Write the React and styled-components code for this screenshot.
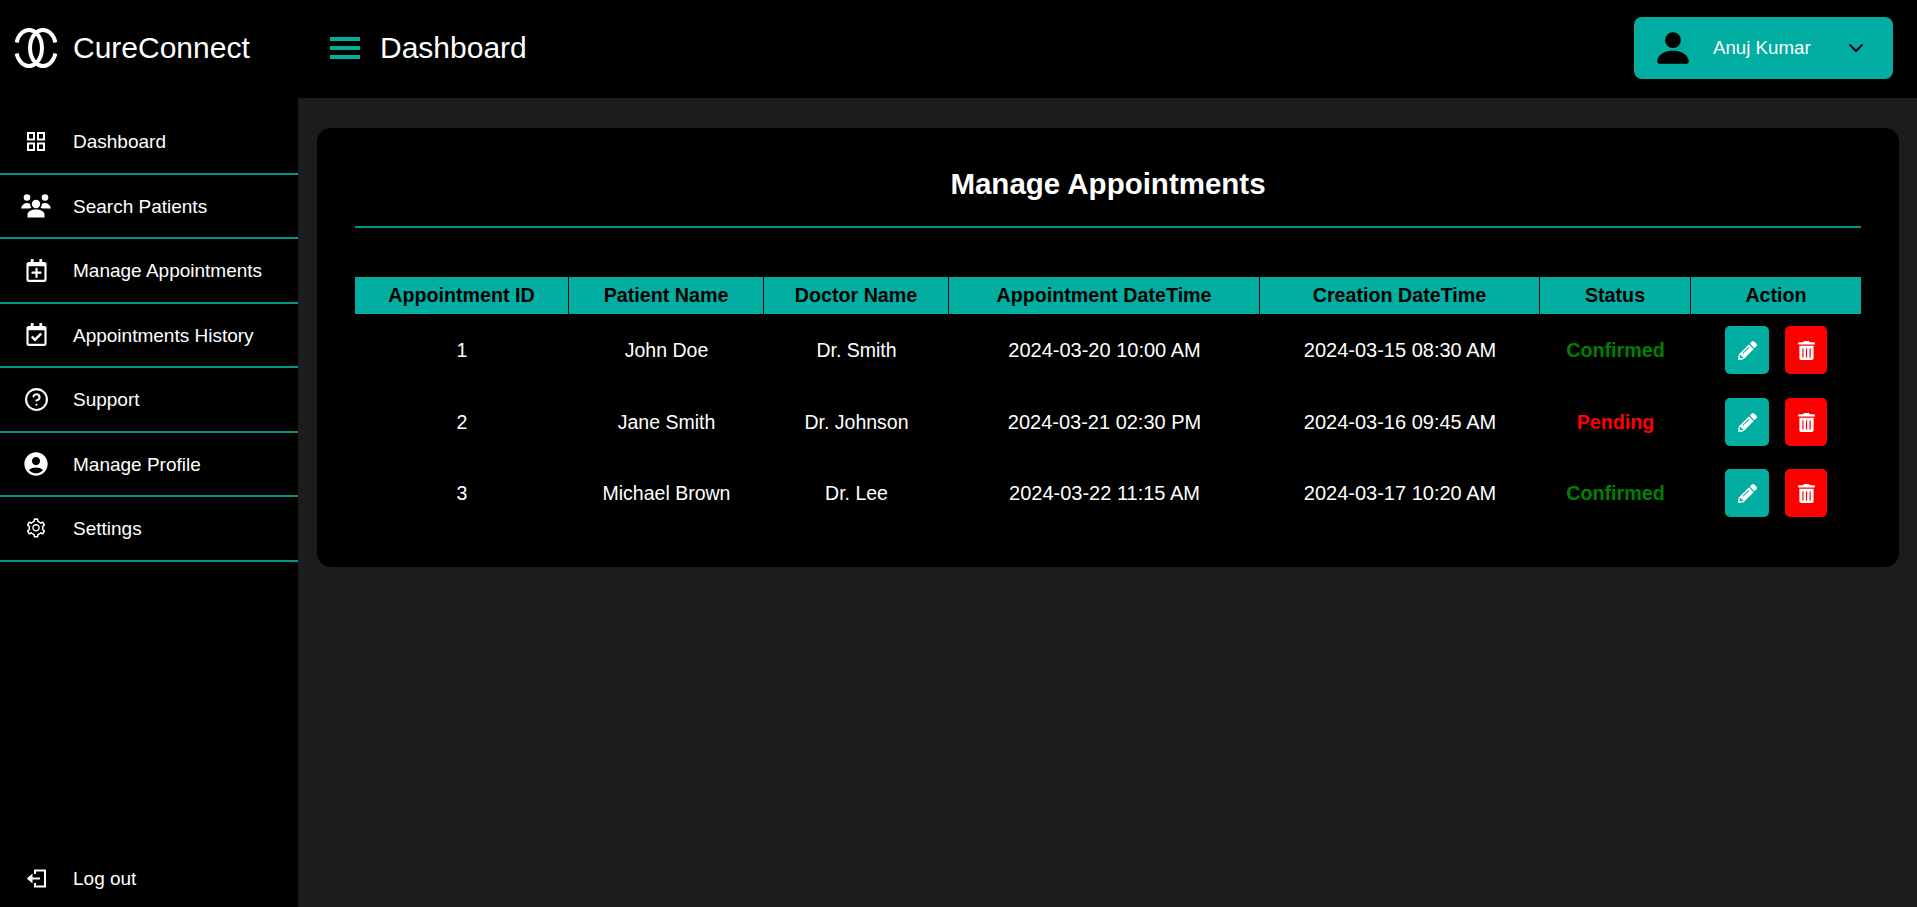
import React from "react";
import styled, { createGlobalStyle } from "styled-components";
import { MdAccountCircle } from "react-icons/md";
import { FaRegCalendarPlus, FaRegCalendarCheck, FaPencilAlt, FaTrashAlt } from "react-icons/fa";
import { FiHelpCircle, FiChevronDown } from "react-icons/fi";
import { AiOutlineSetting } from "react-icons/ai";
import { BsPersonFill } from "react-icons/bs";

const TEAL = "#02ada1";
const RULE = "#02928a";

const Global = createGlobalStyle`
  html, body { margin: 0; padding: 0; height: 100%; background: #000; }
  body { font-family: "Liberation Sans", Arial, sans-serif; color: #fff; }
  * { box-sizing: border-box; }
`;

const Shell = styled.div`
  display: grid;
  grid-template-columns: 298px 1fr;
  grid-template-rows: 98px 1fr;
  height: 907px;
  overflow: hidden;
`;

const Brand = styled.div`
  display: flex;
  align-items: center;
  padding: 0 0 2px 14px;
  gap: 15px;
  background: #000;
`;

const BrandName = styled.span`
  font-size: 30px;
`;

const TopBar = styled.header`
  display: flex;
  align-items: center;
  justify-content: space-between;
  padding: 0 24px 2px 32px;
  background: #000;
`;

const TitleGroup = styled.div`
  display: flex;
  align-items: center;
  gap: 20px;
`;

const Burger = styled.div`
  display: flex;
  flex-direction: column;
  justify-content: space-between;
  width: 30px;
  height: 22px;
  & > span { display: block; height: 4px; background: ${TEAL}; }
`;

const PageTitle = styled.h1`
  margin: 0;
  font-size: 30px;
  font-weight: 400;
`;

const UserButton = styled.button`
  display: flex;
  align-items: center;
  width: 259px;
  height: 62px;
  padding: 0 25px 0 18px;
  border: 0;
  border-radius: 8px;
  background: ${TEAL};
  color: #fff;
  font: 18.7px "Liberation Sans", Arial, sans-serif;
  & > span { margin-left: 19px; flex: 1; text-align: left; }
  & > svg { color: #000; }
`;

const Side = styled.aside`
  display: flex;
  flex-direction: column;
  justify-content: space-between;
  padding-top: 12px;
  background: #000;
`;

const NavList = styled.nav`
  display: flex;
  flex-direction: column;
`;

const NavRow = styled.div`
  display: flex;
  align-items: center;
  height: ${({ $plain }) => ($plain ? "58px" : "64.5px")};
  border-bottom: ${({ $plain }) => ($plain ? "0" : `2px solid ${RULE}`)};
  font-size: 19px;
`;

const NavIcon = styled.span`
  display: flex;
  align-items: center;
  justify-content: center;
  width: 73px;
  flex: none;
  padding-right: 1px;
`;

const NavLabel = styled.span`
  padding-top: 2px;
`;

const Main = styled.main`
  padding: 30px 18px 0 19px;
  background: #1b1d1c;
`;

const Card = styled.section`
  height: 439px;
  padding: 30px 38px 0 38px;
  border-radius: 14px;
  background: #000;
`;

const CardTitle = styled.h2`
  margin: 0;
  height: 70px;
  padding-top: 7px;
  border-bottom: 2px solid ${RULE};
  font-size: 29.5px;
  line-height: 38px;
  text-align: center;
`;

const Table = styled.table`
  width: 1506px;
  margin-top: 49px;
  table-layout: fixed;
  border-collapse: separate;
  border-spacing: 0;
`;

const Th = styled.th`
  height: 37px;
  padding: 0;
  background: ${TEAL};
  border-right: 1px solid #000;
  color: #000;
  font-size: 19.7px;
  font-weight: 700;
  &:last-child { border-right: 0; }
`;

const BodyRow = styled.tr`
  height: 72px;
  &:last-child { height: 70px; }
`;

const ActionCell = styled.td`
  padding: 0;
`;

const Td = styled.td`
  padding: 0;
  text-align: center;
  font-size: ${({ $date }) => ($date ? "20px" : "19.5px")};
`;

const Status = styled(Td)`
  font-size: 19.7px;
  font-weight: 700;
  color: ${({ $ok }) => ($ok ? "#008000" : "#ff0000")};
`;

const Actions = styled.div`
  display: flex;
  justify-content: center;
  gap: 16px;
`;

const ActionButton = styled.button`
  display: flex;
  align-items: center;
  justify-content: center;
  width: ${({ $danger }) => ($danger ? "42px" : "44px")};
  height: 48px;
  padding: 0;
  border: 0;
  border-radius: 5px;
  background: ${({ $danger }) => ($danger ? "#ff0000" : TEAL)};
  color: #fff;
`;

const Logo = () => (
  <svg width="44" height="40" viewBox="0 0 44 40" fill="none" stroke="#fff" strokeWidth="4">
    <path d="M2.600 14.500A13 18 0 1 1 2.600 25.500" />
    <path d="M41.400 14.500A13 18 0 1 0 41.400 25.500" />
  </svg>
);

const GridIcon = () => (
  <svg width="18" height="19" viewBox="0 0 18 19" fill="none" stroke="#fff" strokeWidth="2">
    <rect x="1" y="1" width="6" height="6.500" />
    <rect x="11" y="1" width="6" height="6.500" />
    <rect x="1" y="11.500" width="6" height="6.500" />
    <rect x="11" y="11.500" width="6" height="6.500" />
  </svg>
);

const GroupIcon = () => (
  <svg width="30" height="24" viewBox="0 0 30 24" fill="#fff">
    <circle cx="6" cy="3.500" r="3.300" />
    <circle cx="24" cy="3.500" r="3.300" />
    <path d="M0 14.500c.6-3 3-5.500 6-5.500 1.200 0 2.300.3 3.200 1-.3 1.500.5 3 1.500 4-1.600.1-2.800.3-3.700.5z" />
    <path d="M30 14.500c-.6-3-3-5.500-6-5.500-1.200 0-2.300.3-3.200 1 .3 1.500-.5 3-1.500 4 1.600.1 2.800.3 3.700.5z" />
    <circle cx="15" cy="10" r="4.200" />
    <path d="M6.500 23.500v-3c0-3 4-5 8.500-5s8.500 2 8.500 5v3z" />
  </svg>
);

const LogoutIcon = () => (
  <svg width="20" height="19" viewBox="0 0 20 19">
    <path d="M9 5V1.500h10v16H9V14" fill="none" stroke="#fff" strokeWidth="2" />
    <path d="M14 8.500v2H6v-2z" fill="#fff" />
    <path d="M6.500 4.500v10L.800 9.500z" fill="#fff" />
  </svg>
);

const navItems = [
  [<GridIcon />, "Dashboard"],
  [<GroupIcon />, "Search Patients"],
  [<FaRegCalendarPlus size={23} />, "Manage Appointments"],
  [<FaRegCalendarCheck size={23} />, "Appointments History"],
  [<FiHelpCircle size={25} />, "Support"],
  [<MdAccountCircle size={28} />, "Manage Profile"],
  [<AiOutlineSetting size={22} />, "Settings"],
];

const columns = [
  ["Appointment ID", 214],
  ["Patient Name", 195],
  ["Doctor Name", 185],
  ["Appointment DateTime", 311],
  ["Creation DateTime", 280],
  ["Status", 151],
  ["Action", 170],
];

const rows = [
  [1, "John Doe", "Dr. Smith", "2024-03-20 10:00 AM", "2024-03-15 08:30 AM", "Confirmed"],
  [2, "Jane Smith", "Dr. Johnson", "2024-03-21 02:30 PM", "2024-03-16 09:45 AM", "Pending"],
  [3, "Michael Brown", "Dr. Lee", "2024-03-22 11:15 AM", "2024-03-17 10:20 AM", "Confirmed"],
];

export default function App() {
  return (
    <Shell>
      <Global />
      <Brand>
        <Logo />
        <BrandName>CureConnect</BrandName>
      </Brand>
      <TopBar>
        <TitleGroup>
          <Burger><span /><span /><span /></Burger>
          <PageTitle>Dashboard</PageTitle>
        </TitleGroup>
        <UserButton>
          <BsPersonFill size={42} />
          <span>Anuj Kumar</span>
          <FiChevronDown size={24} />
        </UserButton>
      </TopBar>
      <Side>
        <NavList>
          {navItems.map(([icon, label]) => (
            <NavRow key={label}>
              <NavIcon>{icon}</NavIcon>
              <NavLabel>{label}</NavLabel>
            </NavRow>
          ))}
        </NavList>
        <NavRow $plain>
          <NavIcon><LogoutIcon /></NavIcon>
          <NavLabel>Log out</NavLabel>
        </NavRow>
      </Side>
      <Main>
        <Card>
          <CardTitle>Manage Appointments</CardTitle>
          <Table>
            <colgroup>
              {columns.map(([name, w]) => <col key={name} style={{ width: w }} />)}
            </colgroup>
            <thead>
              <tr>{columns.map(([name]) => <Th key={name}>{name}</Th>)}</tr>
            </thead>
            <tbody>
              {rows.map((r) => (
                <BodyRow key={r[0]}>
                  {r.slice(0, 5).map((v, i) => <Td key={i} $date={i >= 3}>{v}</Td>)}
                  <Status $ok={r[5] === "Confirmed"}>{r[5]}</Status>
                  <ActionCell>
                    <Actions>
                      <ActionButton aria-label="Edit"><FaPencilAlt size={19} /></ActionButton>
                      <ActionButton $danger aria-label="Delete"><FaTrashAlt size={19} /></ActionButton>
                    </Actions>
                  </ActionCell>
                </BodyRow>
              ))}
            </tbody>
          </Table>
        </Card>
      </Main>
    </Shell>
  );
}
